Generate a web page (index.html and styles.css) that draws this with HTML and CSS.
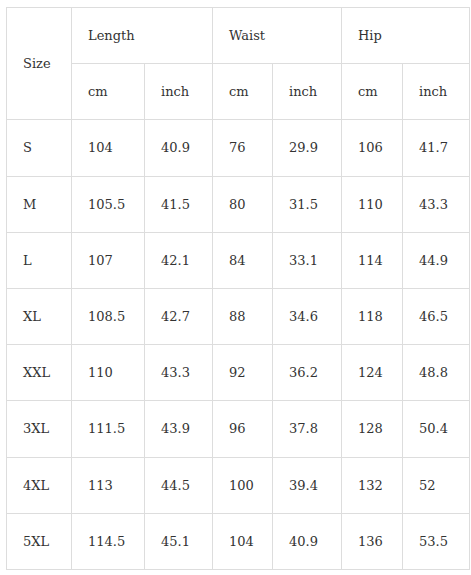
FILE: index.html
```html
<!DOCTYPE html>
<html>
<head>
<meta charset="utf-8">
<link rel="stylesheet" href="styles.css">
</head>
<body>
<table class="size-table">
  <colgroup>
    <col class="c1"><col class="c2"><col class="c3"><col class="c4"><col class="c5"><col class="c6"><col class="c7">
  </colgroup>
  <tr><td rowspan="2">Size</td><td colspan="2">Length</td><td colspan="2">Waist</td><td colspan="2">Hip</td></tr>
  <tr><td>cm</td><td>inch</td><td>cm</td><td>inch</td><td>cm</td><td>inch</td></tr>
  <tr><td>S</td><td>104</td><td>40.9</td><td>76</td><td>29.9</td><td>106</td><td>41.7</td></tr>
  <tr><td>M</td><td>105.5</td><td>41.5</td><td>80</td><td>31.5</td><td>110</td><td>43.3</td></tr>
  <tr><td>L</td><td>107</td><td>42.1</td><td>84</td><td>33.1</td><td>114</td><td>44.9</td></tr>
  <tr><td>XL</td><td>108.5</td><td>42.7</td><td>88</td><td>34.6</td><td>118</td><td>46.5</td></tr>
  <tr><td>XXL</td><td>110</td><td>43.3</td><td>92</td><td>36.2</td><td>124</td><td>48.8</td></tr>
  <tr><td>3XL</td><td>111.5</td><td>43.9</td><td>96</td><td>37.8</td><td>128</td><td>50.4</td></tr>
  <tr><td>4XL</td><td>113</td><td>44.5</td><td>100</td><td>39.4</td><td>132</td><td>52</td></tr>
  <tr><td>5XL</td><td>114.5</td><td>45.1</td><td>104</td><td>40.9</td><td>136</td><td>53.5</td></tr>
</table>
</body>
</html>
```
FILE: styles.css
```css
html, body {
  margin: 0;
  padding: 0;
  background: #ffffff;
}
body {
  padding: 7px 0 0 6px;
}
.size-table {
  border-collapse: collapse;
  table-layout: fixed;
  width: 463px;
  font-family: "DejaVu Serif", serif;
  font-size: 13px;
  color: #333333;
}
.c1 { width: 65px; }
.c2 { width: 73px; }
.c3 { width: 68px; }
.c4 { width: 60px; }
.c5 { width: 69px; }
.c6 { width: 61px; }
.c7 { width: 67px; }
.size-table td {
  border: 1px solid #dddddd;
  height: 55.2px;
  padding: 0 0 0 16px;
  vertical-align: middle;
  text-align: left;
  white-space: nowrap;
}
```
